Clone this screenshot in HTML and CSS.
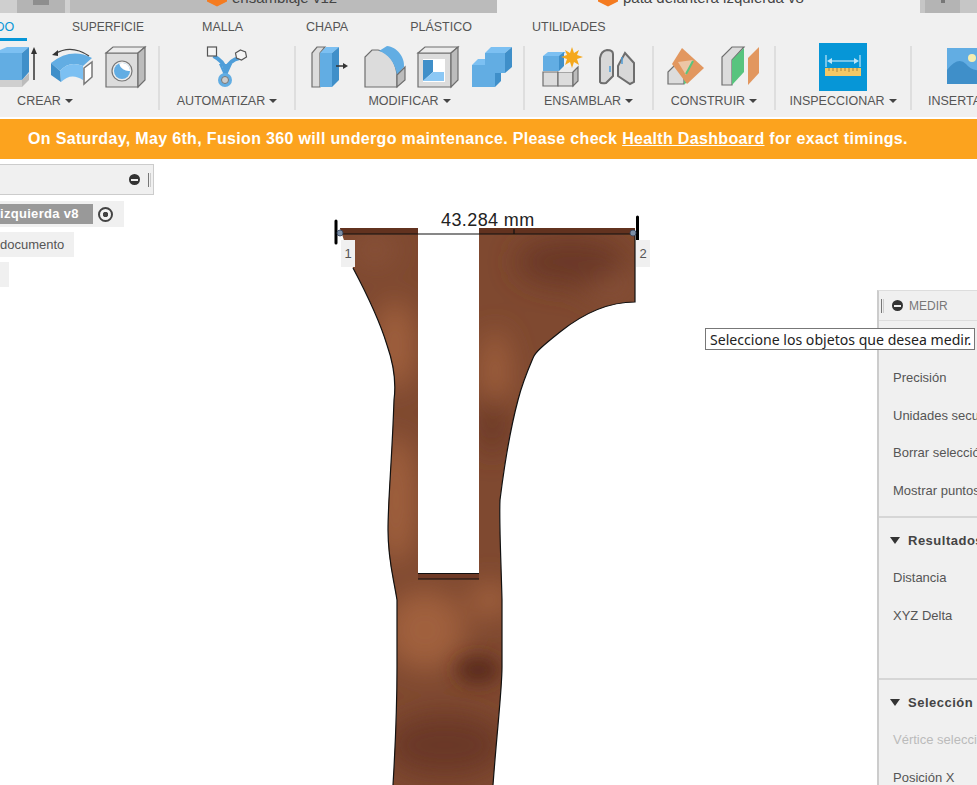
FILE: index.html
```html
<!DOCTYPE html>
<html lang="es">
<head>
    <meta charset="UTF-8">
    <title>Fusion 360 - Medir</title>
    <link rel="stylesheet" href="styles.css">
</head>
<body>

<div class="doc-tabs">
    <div class="doc-tab tab-stub"></div>
    <div class="doc-tab tab-home"><span class="home-mark"></span></div>
    <div class="doc-tab tab-gap"></div>
    <div class="doc-tab tab-other">
        <svg class="cube-mark" viewBox="0 0 20 13"><polygon points="0,0 20,0 20,1.500 10,6.500 0,1.500"/></svg>
        <span class="doc-name">ensamblaje v12</span>
    </div>
    <div class="doc-tab tab-active">
        <svg class="cube-mark" viewBox="0 0 20 13"><polygon points="0,0 20,0 20,1.500 10,6.500 0,1.500"/></svg>
        <span class="doc-name">pata delantera izquierda v8</span>
    </div>
    <div class="doc-tab tab-end-a"></div>
    <div class="doc-tab tab-end"><span class="end-mark"></span></div>
    <div class="doc-tab tab-end-b"></div>
</div>

<div class="ribbon">
    <div class="ribbon-tabs">
        <span class="rtab rtab-active">SÓLIDO</span>
        <span class="rtab rtab-sup">SUPERFICIE</span>
        <span class="rtab rtab-mal">MALLA</span>
        <span class="rtab rtab-cha">CHAPA</span>
        <span class="rtab rtab-pla">PLÁSTICO</span>
        <span class="rtab rtab-uti">UTILIDADES</span>
    </div>

    <div class="tool-groups">
        <div class="group group-create">
            <div class="tools">
                <span class="tool-blank"></span>
                <svg class="tool" viewBox="-2 46 42 42">
                    <polygon class="g2" points="-6,80 23,80 23,87 -6,87"/>
                    <polygon class="g3" points="23,80 30,73 30,80 23,87"/>
                    <polygon class="b1" points="-6,53 8,47 30,47 23,53"/>
                    <polygon class="b2" points="-6,53 23,53 23,80 -6,80"/>
                    <polygon class="b3" points="23,53 30,47 30,72 23,80"/>
                    <line class="ink" x1="35" y1="50" x2="35" y2="80"/>
                    <polygon class="ink-fill" points="35,47 32,54 38,54"/>
                </svg>
                <svg class="tool" viewBox="52 46 42 42">
                    <path class="b2" d="M52,63 Q72,47 93,58 L84,66 Q70,60 61,71 Z"/>
                    <path class="b1" d="M61,71 Q70,60 84,66 L84,80 Q72,72 62,82 Z"/>
                    <polygon class="b3" points="52,63 61,71 62,82 52,75"/>
                    <polygon class="end-face" points="85,68 93,62 93,77 85,84"/>
                    <path class="ink-thin" d="M56,54 Q72,44 90,56"/>
                    <polygon class="ink-fill" points="53,55 59,50 59,56"/>
                </svg>
                <svg class="tool" viewBox="106 46 42 42">
                    <polygon class="g1 edge" points="107,53 139,53 139,87 107,87"/>
                    <polygon class="g0 edge" points="107,53 114,47 146,47 139,53"/>
                    <polygon class="g3 edge" points="139,53 146,47 146,80 139,87"/>
                    <circle class="ring" cx="123" cy="71" r="10"/>
                    <circle class="b2" cx="123" cy="71" r="8"/>
                    <path class="white-fill" d="M120,63.500 A8,8 0 0 1 131,71 A10,10 0 0 1 120,63.500 Z"/>
                </svg>
            </div>
            <div class="group-label">CREAR<i class="caret"></i></div>
        </div>

        <div class="group group-auto">
            <div class="tools">
                <svg class="tool" viewBox="206.5 46 42 42">
                    <path class="branch" d="M214,56 Q224,61 226,70 M240,58 Q230,60 226,70 M226,70 V78"/>
                    <polygon class="branch-thin" points="221,65 231,65 226,76"/>
                    <rect class="node" x="208" y="47" width="9" height="9"/>
                    <polygon class="node" points="241,50 246,52 247,57 242,60 237,58 236,53"/>
                    <circle class="b2" cx="225.500" cy="80" r="7"/>
                    <circle class="hub" cx="225.500" cy="80" r="3.500"/>
                </svg>
            </div>
            <div class="group-label">AUTOMATIZAR<i class="caret"></i></div>
        </div>

        <div class="group group-modify">
            <div class="tools">
                <svg class="tool" viewBox="310 46 42 42">
                    <polygon class="g1 edge" points="312,87 312,53 317,47 325,47 320,53 320,87"/>
                    <polygon class="b1" points="320,53 326,47 339,47 332,53"/>
                    <polygon class="b2" points="320,53 332,53 332,87 320,87"/>
                    <polygon class="b3" points="332,53 339,47 339,80 332,87"/>
                    <line class="ink" x1="336" y1="66" x2="345" y2="66"/>
                    <polygon class="ink-fill" points="348,66 343,63 343,69"/>
                </svg>
                <svg class="tool" viewBox="364 46 42 42">
                    <path class="g1 edge" d="M365,87 V57 L372,50 H378 C388,52 395,60 397,74 V87 Z"/>
                    <path class="b2" d="M379,51 L387,46 C397,47 405,57 404,67 L397,75 C395,62 388,54 379,51 Z"/>
                    <polygon class="g3 edge" points="397,75 405,67 405,80 397,87"/>
                </svg>
                <svg class="tool" viewBox="418 46 42 42">
                    <polygon class="g1 edge" points="418,53 451,53 451,87 418,87"/>
                    <polygon class="g0 edge" points="418,53 425,47 458,47 451,53"/>
                    <polygon class="g3 edge" points="451,53 458,47 458,80 451,87"/>
                    <rect class="white-fill" x="423" y="59" width="22" height="23"/>
                    <polygon class="b3" points="423,60 433,60 433,72 423,81"/>
                    <polygon class="b4" points="433,72 444,72 444,81 423,81"/>
                </svg>
                <svg class="tool" viewBox="472 46 42 42">
                    <polygon class="b1" points="485,53 491,47 512,47 505,53"/>
                    <polygon class="b1" points="472,65 478,59 485,59 485,65"/>
                    <polygon class="b2" points="485,53 505,53 505,73 495,73 495,87 472,87 472,65 485,65"/>
                    <polygon class="b3" points="505,53 512,47 512,67 505,73"/>
                    <polygon class="b3" points="495,73 501,73 501,81 495,87"/>
                </svg>
            </div>
            <div class="group-label">MODIFICAR<i class="caret"></i></div>
        </div>

        <div class="group group-assemble">
            <div class="tools">
                <svg class="tool" viewBox="541 46 42 42">
                    <polygon class="g1 edge" points="543,72 558,72 558,86 543,86"/>
                    <polygon class="g1 edge" points="558,72 573,72 573,86 558,86"/>
                    <polygon class="g0" points="558,72 563,67 578,67 573,72"/>
                    <polygon class="g3 edge" points="573,72 578,67 578,81 573,86"/>
                    <polygon class="b1" points="543,56 548,52 566,52 561,56"/>
                    <rect class="b2" x="543" y="56" width="16" height="15"/>
                    <polygon class="b3" points="559,56 564,52 564,66 559,71"/>
                    <polygon class="star" points="572,47 574,53 579,50 577,55 583,57 577,59 579,65 574,62 572,68 570,62 565,65 567,59 561,57 567,55 565,50 570,53"/>
                </svg>
                <svg class="tool" viewBox="595 46 42 42">
                    <path class="plate" d="M600,82 V58 Q601,51 607,50 Q613,50 613,54 V76 L606,83 Q601,84 600,82 Z"/>
                    <path class="plate" d="M618,66 L625,53 L634,63 V82 L630,84 L618,76 Z"/>
                    <line class="pin" x1="610" y1="66" x2="610" y2="72"/>
                    <line class="pin" x1="622" y1="57" x2="622" y2="64"/>
                </svg>
            </div>
            <div class="group-label">ENSAMBLAR<i class="caret"></i></div>
        </div>

        <div class="group group-build">
            <div class="tools">
                <svg class="tool" viewBox="667 46 42 42">
                    <polygon class="g1 edge" points="669,84 669,72 676,65 685,70 685,84"/>
                    <polygon class="green" points="685,84 685,72 690,82"/>
                    <polygon class="orange" points="683,48 705,68 688,84 673,64"/>
                    <polygon class="orange-pale" points="679,62 694,60 687,75"/>
                    <line class="green-line" x1="687" y1="74" x2="694" y2="61"/>
                </svg>
                <svg class="tool" viewBox="721 46 42 42">
                    <polygon class="g1 edge" points="723,85 723,57 733,47 745,47 733,60 733,85"/>
                    <polygon class="green" points="733,60 745,48 745,72 733,85"/>
                    <polygon class="orange" points="749,58 760,47 760,73 749,85"/>
                </svg>
            </div>
            <div class="group-label">CONSTRUIR<i class="caret"></i></div>
        </div>

        <div class="group group-inspect">
            <div class="tools">
                <svg class="tool tool-on" viewBox="820 43 48 48">
                    <rect class="on-bg" x="820" y="43" width="48" height="48"/>
                    <line class="dim" x1="827" y1="55" x2="827" y2="67"/>
                    <line class="dim" x1="861" y1="55" x2="861" y2="67"/>
                    <line class="dim" x1="830" y1="61" x2="858" y2="61"/>
                    <polygon class="dim-fill" points="828,61 833,58 833,64"/>
                    <polygon class="dim-fill" points="860,61 855,58 855,64"/>
                    <rect class="rule" x="826" y="68" width="36" height="8"/>
                    <path class="rule-ticks" d="M830,68 v3 M834,68 v3 M838,68 v4 M842,68 v3 M846,68 v3 M850,68 v4 M854,68 v3 M858,68 v3"/>
                </svg>
            </div>
            <div class="group-label">INSPECCIONAR<i class="caret"></i></div>
        </div>

        <div class="group group-insert">
            <div class="tools">
                <svg class="tool tool-wide" viewBox="947 46 66 42">
                    <rect class="b2" x="947" y="48" width="66" height="36"/>
                    <path class="b3" d="M947,84 V70 Q958,56 966,64 Q972,72 984,70 L1013,84 Z"/>
                    <circle class="sun" cx="972" cy="58" r="4"/>
                </svg>
            </div>
            <div class="group-label">INSERTAR<i class="caret"></i></div>
        </div>
    </div>
</div>

<div class="banner">
    On Saturday, May 6th, Fusion 360 will undergo maintenance. Please check <a class="banner-link">Health Dashboard</a> for exact timings.
</div>

<div class="canvas">
    <svg class="part" viewBox="0 159 977 626">
        <defs>
            <filter id="soft" x="-60%" y="-60%" width="220%" height="220%">
                <feGaussianBlur stdDeviation="14"/>
            </filter>
            <filter id="softer" x="-80%" y="-80%" width="260%" height="260%">
                <feGaussianBlur stdDeviation="9"/>
            </filter>
            <clipPath id="partShape">
                <path d="M340,228 H418 V573 H479 V228 H635 V302 C610,302 585,312 560,332 C545,344 535,352 533,358 C527,372 522,384 518,400 C510,430 505,460 500,500 C499,520 501,560 502,600 V667 C502,690 497,730 493,785 H393 C395,750 397,720 397,667 V600 C393,575 388,560 388,530 C388,500 392,460 394,400 C396,385 394,365 387,345 C380,322 370,300 353,268 Z"/>
            </clipPath>
        </defs>
        <g clip-path="url(#partShape)">
            <rect class="wood" x="330" y="220" width="320" height="570"/>
            <g filter="url(#soft)">
                <ellipse class="wood-light" cx="395" cy="345" rx="20" ry="45"/>
                <ellipse class="wood-light" cx="396" cy="500" rx="20" ry="65"/>
                <ellipse class="wood-light" cx="425" cy="630" rx="40" ry="40"/>
                <ellipse class="wood-light" cx="490" cy="600" rx="22" ry="18"/>
                <ellipse class="wood-light" cx="495" cy="375" rx="14" ry="45"/>
                <ellipse class="wood-mid" cx="610" cy="285" rx="24" ry="14"/>
                <ellipse class="wood-dark" cx="570" cy="262" rx="55" ry="24"/>
                <ellipse class="wood-mid" cx="375" cy="250" rx="20" ry="14"/>
                <ellipse class="wood-dark" cx="445" cy="745" rx="60" ry="32"/>
                <ellipse class="wood-dark" cx="492" cy="425" rx="14" ry="30"/>
            </g>
            <ellipse class="wood-deep" cx="478" cy="670" rx="22" ry="14" filter="url(#softer)"/>
            <rect class="wood-top" x="330" y="228" width="320" height="6"/>
            <rect class="wood-lip" x="418" y="574" width="61" height="5"/>
        </g>
        <path class="outline" d="M353,268 C370,300 380,322 387,345 C394,365 396,385 394,400 C392,460 388,500 388,530 C388,560 393,575 397,600 V667 C397,720 395,750 393,785"/>
        <path class="outline" d="M635,234 V302 C610,302 585,312 560,332 C545,344 535,352 533,358 C527,372 522,384 518,400 C510,430 505,460 500,500 C499,520 501,560 502,600 V667 C502,690 497,730 493,785"/>
        <path class="outline" d="M418,573.500 H479 M418,579 H479"/>
        <line class="dim-line" x1="336" y1="234" x2="636" y2="234"/>
        <line class="dim-line" x1="514" y1="229" x2="514" y2="234"/>
        <line class="dim-tick" x1="336" y1="221" x2="336" y2="243"/>
        <line class="dim-tick" x1="637.500" y1="217" x2="637.500" y2="243"/>
        <circle class="pick" cx="340" cy="233" r="3"/>
        <circle class="pick" cx="633" cy="233" r="3"/>
        <text class="dim-text" x="441" y="226">43.284 mm</text>
    </svg>

    <span class="point-tag tag-one">1</span>
    <span class="point-tag tag-two">2</span>

    <div class="browser">
        <div class="browser-head">
            <span class="minus-dot"></span>
            <span class="grip"></span>
        </div>
        <div class="browser-row row-doc">
            <span class="doc-chip">izquierda v8</span>
            <span class="target"></span>
        </div>
        <div class="browser-row row-settings">documento</div>
        <div class="browser-row row-stub"></div>
    </div>

    <div class="measure">
        <div class="measure-head">
            <span class="grip"></span>
            <span class="minus-dot"></span>
            <span class="measure-title">MEDIR</span>
        </div>
        <div class="measure-body">
            <div class="measure-row">Precisión</div>
            <div class="measure-row">Unidades secundarias</div>
            <div class="measure-row">Borrar selección</div>
            <div class="measure-row">Mostrar puntos de ajuste</div>
        </div>
        <div class="measure-section">
            <div class="section-head"><i class="section-arrow"></i>Resultados</div>
            <div class="measure-row">Distancia</div>
            <div class="measure-row">XYZ Delta</div>
        </div>
        <div class="measure-section section-sel">
            <div class="section-head"><i class="section-arrow"></i>Selección</div>
            <div class="measure-row row-off">Vértice seleccionado</div>
            <div class="measure-row">Posición X</div>
        </div>
    </div>

    <div class="tip">Seleccione los objetos que desea medir.</div>
</div>

</body>
</html>
```

FILE: styles.css
```css
html, body {
    margin: 0;
    height: 100%;
}
body {
    width: 977px;
    height: 785px;
    overflow: hidden;
    display: flex;
    flex-direction: column;
    background: white;
    font-family: "Liberation Sans", Arial, sans-serif;
    color: #555;
}

/* document tabs, cut off by the top of the window */
.doc-tabs {
    display: flex;
    height: 13px;
    flex: none;
    overflow: hidden;
    background: #bbb;
}
.doc-tab {
    height: 13px;
    flex: none;
    display: flex;
    overflow: hidden;
}
.tab-stub { width: 17px; background: #cfcfcf; }
.tab-home { width: 48px; background: #b4b4b4; justify-content: center; }
.home-mark { width: 16px; height: 5px; background: #8e8e8e; }
.tab-gap { width: 5px; background: #d0d0d0; }
.tab-other { width: 427px; background: #bbb; padding-left: 137px; box-sizing: border-box; }
.tab-active { width: 423px; background: #f0f0f0; padding-left: 101px; box-sizing: border-box; }
.tab-end-a { width: 5px; background: #c6c6c6; }
.tab-end { width: 35px; background: #b4b4b4; justify-content: center; }
.tab-end-b { flex: 1; background: #c6c6c6; }
.end-mark { width: 4px; height: 3px; background: #777; }
.cube-mark {
    width: 20px;
    height: 13px;
    flex: none;
    fill: #f47b20;
}
.doc-name {
    margin-left: 5px;
    margin-top: -10px;
    font-size: 15px;
    line-height: 16px;
    color: #444;
    white-space: nowrap;
}

/* ribbon */
.ribbon {
    height: 104px;
    flex: none;
    background: #f0f0f0;
    margin-bottom: 2px;
}
.ribbon-tabs {
    height: 28px;
    display: flex;
    align-items: center;
    font-size: 12.5px;
    white-space: nowrap;
}
.rtab { flex: none; }
.rtab-active {
    width: 60px;
    margin-left: -50px;
    padding-left: 17px;
    height: 28px;
    line-height: 28px;
    color: #0696d7;
    background: linear-gradient(#0696d7, #0696d7) no-repeat 0 25px / 100% 3px;
}
.rtab-sup { margin-left: 45px; font-size: 12px; }
.rtab-mal { margin-left: 58px; }
.rtab-cha { margin-left: 63px; }
.rtab-pla { margin-left: 62px; }
.rtab-uti { margin-left: 60px; }

.tool-groups {
    display: flex;
    margin-top: 5px;
    height: 64px;
}
.group {
    flex: none;
    box-sizing: border-box;
    border-right: 2px solid #dedede;
}
.group-create { width: 228px; margin-left: -68px; }
.group-auto { width: 136px; }
.group-modify { width: 229px; }
.group-assemble { width: 129px; }
.group-build { width: 122px; }
.group-inspect { width: 136px; }
.group-insert { width: 136px; border-right: 0; }
.group-insert .group-label { padding-right: 30px; }
.tools {
    display: flex;
    justify-content: center;
    gap: 12px;
    height: 42px;
}
.tool-blank { width: 42px; flex: none; }
.tool {
    width: 42px;
    height: 42px;
    flex: none;
    overflow: visible;
}
.tool-on { width: 48px; height: 48px; margin-top: -3px; }
.tool-wide { width: 66px; }
.group-modify .tools { padding-left: 4px; }
.group-label {
    margin-top: 6px;
    height: 14px;
    line-height: 14px;
    font-size: 12.5px;
    text-align: center;
    white-space: nowrap;
}
.caret {
    display: inline-block;
    margin-left: 4px;
    vertical-align: 2px;
    border-left: 4px solid transparent;
    border-right: 4px solid transparent;
    border-top: 4px solid #444;
}

/* icon colours */
.b1 { fill: #7cc0f2; }
.b2 { fill: #62ade3; }
.b3 { fill: #3f8fc9; }
.b4 { fill: #8cc8f5; }
.g0 { fill: #ececec; }
.g1 { fill: #dcdcdc; }
.g2 { fill: #cfcfcf; }
.g3 { fill: #bcbcbc; }
.edge { stroke: #6e6e6e; stroke-width: 1.2; }
.ink { stroke: #333; stroke-width: 1.5; }
.ink-thin { stroke: #444; stroke-width: 1.2; fill: none; }
.ink-fill { fill: #333; }
.white-fill { fill: white; }
.end-face { fill: white; stroke: #777; stroke-width: 1.5; }
.ring { fill: #eee; stroke: #777; stroke-width: 1.2; }
.branch { fill: none; stroke: #4f9ed9; stroke-width: 4; }
.branch-thin { fill: none; stroke: #4f9ed9; stroke-width: 2; }
.node { fill: #f5f5f5; stroke: #555; stroke-width: 1.2; }
.hub { fill: #ccc; stroke: #777; stroke-width: 1; }
.star { fill: #f5a81c; }
.plate { fill: #d8d8d8; stroke: #6e6e6e; stroke-width: 2; }
.pin { stroke: #4f9ed9; stroke-width: 1.5; }
.orange { fill: #e2975f; }
.orange-pale { fill: #ecc6a6; }
.green { fill: #58c47e; }
.green-line { stroke: #58c47e; stroke-width: 2; }
.on-bg { fill: #0696d7; }
.dim { stroke: #bfe6f7; stroke-width: 1.2; }
.dim-fill { fill: #bfe6f7; }
.rule { fill: #f3c866; }
.rule-ticks { stroke: #a8843a; stroke-width: 1; fill: none; }
.sun { fill: #f6eeb0; }

/* notice */
.banner {
    height: 40px;
    flex: none;
    background: #fca31e;
    color: white;
    font-size: 16px;
    font-weight: bold;
    line-height: 40px;
    padding-left: 28px;
    letter-spacing: 0.34px;
    white-space: nowrap;
}
.banner-link { text-decoration: underline; }

/* 3D canvas */
.canvas {
    flex: 1;
    position: relative;
    overflow: hidden;
    background: white;
}
.part {
    position: absolute;
    left: 0;
    top: 0;
    width: 977px;
    height: 626px;
}
.wood { fill: #7f4930; }
.wood-light { fill: #a0603e; }
.wood-mid { fill: #8a523a; }
.wood-dark { fill: #6b3826; }
.wood-deep { fill: #5a2c1c; }
.wood-top { fill: #62321f; }
.wood-lip { fill: #6e3a26; }
.outline { fill: none; stroke: #111; stroke-width: 1.2; }
.dim-line { stroke: #111; stroke-width: 1.2; }
.dim-tick { stroke: #000; stroke-width: 3; stroke-linecap: round; }
.pick { fill: #7d90a8; stroke: #33415a; stroke-width: 0.8; }
.dim-text {
    font-family: "Liberation Sans", Arial, sans-serif;
    font-size: 18px;
    letter-spacing: 0.4px;
    fill: #222;
}
.point-tag {
    position: absolute;
    top: 81px;
    width: 14px;
    height: 27px;
    line-height: 27px;
    background: #f0f0f0;
    font-size: 13px;
    text-align: center;
    color: #555;
}
.tag-one { left: 341px; }
.tag-two { left: 636px; }

/* browser panel */
.browser {
    position: absolute;
    left: 0;
    top: 5px;
    display: flex;
    flex-direction: column;
    align-items: flex-start;
}
.browser-head {
    box-sizing: border-box;
    width: 154px;
    height: 31px;
    background: #f0f0f0;
    border: 1px solid #ccc;
    border-left: 0;
    display: flex;
    align-items: center;
    justify-content: flex-end;
    gap: 8px;
    padding-right: 2px;
}
.minus-dot {
    width: 11px;
    height: 11px;
    flex: none;
    border-radius: 50%;
    background: linear-gradient(#eee, #eee) no-repeat center / 7px 2px, #333;
}
.grip {
    width: 1px;
    height: 14px;
    flex: none;
    border-left: 1px solid #777;
    border-right: 1px solid #ccc;
}
.browser-row {
    background: #f0f0f0;
    margin-top: 5px;
    height: 25px;
    font-size: 13px;
    line-height: 25px;
    white-space: nowrap;
}
.row-doc {
    width: 124px;
    height: 26px;
    margin-top: 6px;
    display: flex;
    align-items: center;
}
.doc-chip {
    width: 93px;
    flex: none;
    height: 20px;
    line-height: 20px;
    background: #999;
    color: white;
    font-size: 13px;
    font-weight: bold;
    letter-spacing: 0.3px;
}
.target {
    width: 11px;
    height: 11px;
    margin-left: 5px;
    flex: none;
    border: 2px solid #444;
    border-radius: 50%;
    background: radial-gradient(circle, #444 0 2.5px, #f5f5f5 3px);
}
.row-settings { width: 74px; }
.row-stub { width: 9px; }

/* measure panel */
.measure {
    position: absolute;
    left: 877px;
    top: 131px;
    width: 300px;
    height: 520px;
    background: #f0f0f0;
    border-left: 2px solid #ccc;
    border-top: 1px solid #ddd;
    white-space: nowrap;
}
.measure-head {
    height: 29px;
    display: flex;
    align-items: center;
    padding-left: 2px;
    border-bottom: 1px solid #ddd;
}
.measure-head .minus-dot { margin-left: 8px; }
.measure-title {
    margin-left: 6px;
    font-size: 12px;
    color: #777;
}
.measure-body {
    padding: 38px 0 7px;
}
.measure-row {
    height: 37.5px;
    line-height: 37.5px;
    padding-left: 14px;
    font-size: 13px;
    color: #555;
}
.row-off { color: #bbb; }
.measure-section {
    border-top: 2px solid #d6d6d6;
    padding: 4px 0 44px;
}
.section-sel { padding-bottom: 0; }
.section-head {
    height: 37px;
    line-height: 37px;
    padding-left: 11px;
    font-size: 13px;
    font-weight: bold;
    letter-spacing: 0.5px;
    color: #444;
}
.section-arrow {
    display: inline-block;
    margin-right: 8px;
    vertical-align: 1px;
    border-left: 5.5px solid transparent;
    border-right: 5.5px solid transparent;
    border-top: 7px solid #333;
}

.tip {
    position: absolute;
    left: 705px;
    top: 169px;
    box-sizing: border-box;
    width: 270px;
    height: 22px;
    line-height: 21px;
    padding-left: 4px;
    background: white;
    border: 1px solid #777;
    color: #222;
    font-family: "Noto Sans", sans-serif;
    font-size: 14.1px;
    white-space: nowrap;
}
```
